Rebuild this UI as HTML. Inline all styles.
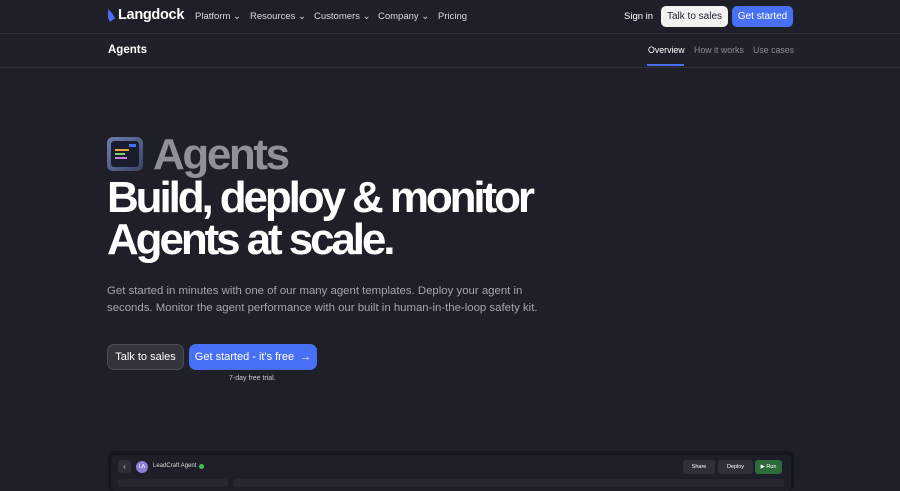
<!DOCTYPE html>
<html><head><style>
*{box-sizing:border-box;margin:0;padding:0}
body{width:900px;height:484px;overflow:hidden;background:#1e1f29;font-family:"Liberation Sans",sans-serif;color:#fff;position:relative}
.a{position:absolute;white-space:nowrap}
.nav{font-size:9.5px;color:#d8d8de}
.btn{position:absolute;border-radius:5px;font-size:10px;display:flex;align-items:center;justify-content:center}
h1{font-size:44px;font-weight:bold;letter-spacing:-3.1px;line-height:42px}
</style></head><body>
<div class="a" style="left:0;top:33px;width:900px;height:1px;background:#2e2f3a"></div>
<div class="a" style="left:0;top:34px;width:900px;height:33px;background:#1f202a"></div>
<div class="a" style="left:0;top:67px;width:900px;height:1px;background:#2e2f3a"></div>
<svg class="a" style="left:107px;top:9px" width="8" height="13" viewBox="0 0 8 13"><path d="M1 0 L5 4 L8 9 L3 13 L1 9 Z" fill="#4c6ef5"/></svg>
<div class="a" style="left:118px;top:7px;font-size:14.5px;font-weight:bold;letter-spacing:-0.3px">Langdock</div>
<div class="a nav" style="left:195px;top:11px">Platform ⌄</div>
<div class="a nav" style="left:250px;top:11px">Resources ⌄</div>
<div class="a nav" style="left:314px;top:11px">Customers ⌄</div>
<div class="a nav" style="left:378px;top:11px">Company ⌄</div>
<div class="a nav" style="left:438px;top:11px">Pricing</div>
<div class="a nav" style="left:624px;top:11px;color:#fff">Sign in</div>
<div class="btn" style="left:661px;top:6px;width:67px;height:21px;background:#f2f2f3;color:#1e1f29">Talk to sales</div>
<div class="btn" style="left:732px;top:6px;width:61px;height:21px;background:#4770f5;color:#fff">Get started</div>
<div class="a" style="left:108px;top:44px;font-size:11.5px;font-weight:bold">Agents</div>
<div class="a" style="left:648px;top:45px;font-size:8.8px;color:#fff">Overview</div>
<div class="a" style="left:647px;top:64px;width:37px;height:2px;background:#4770f5"></div>
<div class="a" style="left:694px;top:45px;font-size:8.8px;color:#8a8b94">How it works</div>
<div class="a" style="left:753px;top:45px;font-size:8.8px;color:#8a8b94">Use cases</div>
<div class="a" style="left:107px;top:137px;width:36px;height:34px;border-radius:6px;background:linear-gradient(135deg,#6d7fae,#3a4466);padding:4px">
<div style="width:100%;height:100%;background:#1a1d2b;border-radius:3px;position:relative">
<div style="position:absolute;left:4px;top:8px;width:14px;height:2px;background:#e9a33a"></div>
<div style="position:absolute;left:4px;top:12px;width:10px;height:2px;background:#7ccf6a"></div>
<div style="position:absolute;left:4px;top:16px;width:12px;height:2px;background:#c97bdc"></div>
<div style="position:absolute;left:18px;top:3px;width:7px;height:3px;background:#4770f5"></div></div></div>
<h1 class="a" style="left:153px;top:134px;color:#8f9098;letter-spacing:-2.4px">Agents</h1>
<h1 class="a" style="left:107px;top:177px">Build, deploy &amp; monitor</h1>
<h1 class="a" style="left:107px;top:219px">Agents at scale.</h1>
<div class="a" style="left:107px;top:283px;font-size:11.4px;line-height:17px;color:#a4a5ad">Get started in minutes with one of our many agent templates. Deploy your agent in<br>seconds. Monitor the agent performance with our built in human-in-the-loop safety kit.</div>
<div class="btn" style="left:107px;top:344px;width:77px;height:26px;background:#33343d;border:1px solid #4a4b55;border-radius:7px;font-size:11px">Talk to sales</div>
<div class="btn" style="left:189px;top:344px;width:128px;height:26px;background:#4770f5;border-radius:7px;font-size:11px">Get started - it's free &nbsp;→</div>
<div class="a" style="left:229px;top:375px;font-size:7px;color:#c8c8cf">7-day free trial.</div>
<div class="a" style="left:108px;top:451px;width:686px;height:40px;background:#15161d;border-radius:6px"></div>
<div class="a" style="left:111px;top:455px;width:680px;height:36px;background:#1d1e27;border-radius:4px"></div>
<div class="a" style="left:118px;top:460px;width:13px;height:13px;background:#2e2f39;border-radius:3px;font-size:8px;text-align:center;line-height:13px;color:#ccc">‹</div>
<div class="a" style="left:136px;top:461px;width:12px;height:12px;border-radius:6px;background:#8c7fd6;font-size:5px;text-align:center;line-height:12px">LA</div>
<div class="a" style="left:153px;top:463px;font-size:6px;color:#ddd">LeadCraft Agent</div>
<div class="a" style="left:199px;top:464px;width:5px;height:5px;border-radius:3px;background:#3fbf5a"></div>
<div class="btn" style="left:683px;top:460px;width:32px;height:14px;background:#2e2f39;font-size:5.5px;border-radius:3px">Share</div>
<div class="btn" style="left:718px;top:460px;width:35px;height:14px;background:#2e2f39;font-size:5.5px;border-radius:3px">Deploy</div>
<div class="btn" style="left:755px;top:460px;width:27px;height:14px;background:#2d6b3a;font-size:5.5px;border-radius:3px">▶ Run</div>
<div class="a" style="left:118px;top:479px;width:110px;height:8px;background:#262731;border-radius:2px"></div>
<div class="a" style="left:234px;top:479px;width:370px;height:8px;background:#262731;border-radius:2px"></div>
<div class="a" style="left:604px;top:479px;width:180px;height:8px;background:#262731;border-radius:2px"></div>
</body></html>
